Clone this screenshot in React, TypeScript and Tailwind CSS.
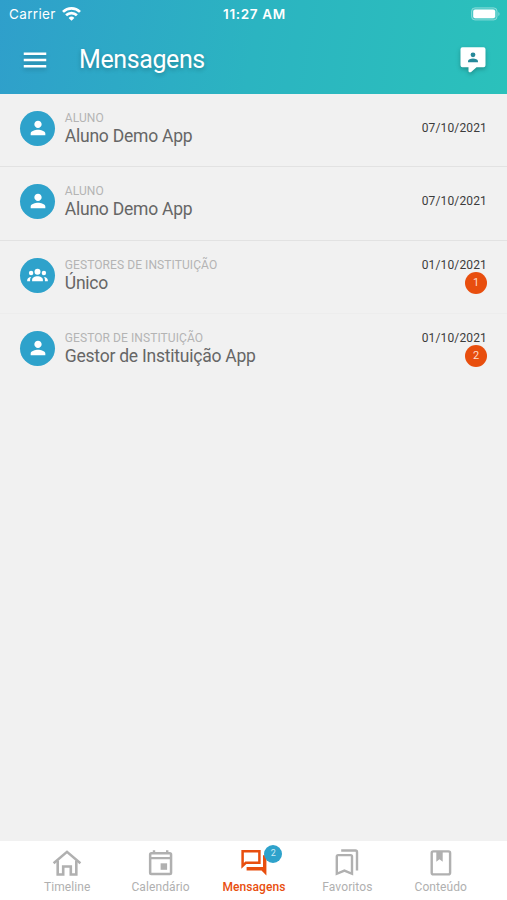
import React from 'react';
import { MdMenu, MdPerson } from 'react-icons/md';

const HomeIcon = () => (
  <svg className="w-[30px] h-[28px]" viewBox="0 0 30 28" fill="none" stroke="currentColor" strokeWidth="2.6">
    <path d="M1.6 14.200 15 2.800 28.400 14.200" strokeWidth="2.500" />
    <path d="M5.700 11.500v14h5.500v-8h7.600v8h5.500v-14" />
  </svg>
);

const CalendarIcon = () => (
  <svg className="w-[30px] h-[28px]" viewBox="0.4 0 30 28" fill="currentColor">
    <path
      fillRule="evenodd"
      d="M7.200 1.200h2.400V3h10.800V1.200h2.400V3h1.400a2.500 2.500 0 0 1 2.500 2.500v18.200a2.500 2.500 0 0 1-2.500 2.500H5.800a2.500 2.500 0 0 1-2.500-2.500V5.500A2.500 2.500 0 0 1 5.800 3h1.400zM5.800 5.400v2.500h18.400V5.400zM5.800 10.300v13.500h18.400V10.300z"
    />
    <path d="M15 14.300h6.500v6.500H15z" />
  </svg>
);

const ForumIcon = () => (
  <svg className="w-[30px] h-[28px]" viewBox="0 0 30 28">
    <path d="M3.600 2.300h16.800v11.500H6.800l-3.200 3z" fill="none" stroke="currentColor" strokeWidth="2.500" />
    <path d="M24 6.200h3.400v20.300L22.500 21.600H7.600V18H24z" fill="currentColor" />
  </svg>
);

const BookmarksIcon = () => (
  <svg className="w-[30px] h-[28px]" viewBox="0 0 30 28" fill="none" stroke="currentColor" strokeWidth="2.400">
    <path d="M4.800 24.800V7.400c0-.8.500-1.300 1.300-1.300h12.600c.8 0 1.300.5 1.300 1.300v17.400l-7.600-3.200z" />
    <path d="M9.200 1.500h14.300c.9 0 1.500.6 1.500 1.500v18.400" />
  </svg>
);

const BookIcon = () => (
  <svg className="w-[30px] h-[28px]" viewBox="0 0 30 28" fill="none" stroke="currentColor" strokeWidth="2.400">
    <rect x="5.700" y="2.400" width="18.400" height="23" rx="1.600" />
    <path d="M10.300 2.400h6.400v10.300l-3.200-2.400-3.200 2.400z" fill="currentColor" stroke="none" />
  </svg>
);

const GroupIcon = () => (
  <svg className="w-[21px] h-[14px]" viewBox="0 0 21 14" fill="currentColor">
    <circle cx="10.500" cy="3.700" r="3" />
    <circle cx="4.100" cy="5" r="2.200" />
    <circle cx="16.900" cy="5" r="2.200" />
    <path d="M5.100 13.300v-1.500c0-2.300 2.700-3.600 5.400-3.600s5.400 1.300 5.400 3.600v1.500z" />
    <path d="M.2 13.300V12c0-1.600 1.600-2.800 4-3-.8.800-1.100 1.700-1.100 2.800v1.500zM20.800 13.300V12c0-1.600-1.600-2.800-4-3 .8.800 1.100 1.700 1.100 2.800v1.500z" />
  </svg>
);

const ContactMessageIcon = () => (
  <svg className="w-[26px] h-[26px] drop-shadow-[0_2px_2px_rgba(0,0,0,0.25)]" viewBox="0 0 26 26">
    <path
      fill="#fff"
      d="M2.500 .3h21a2 2 0 0 1 2 2v16a2 2 0 0 1-2 2h-7l-5.300 4.600c-1.100.9-2.700.4-2.700-1v-3.600h-6a2 2 0 0 1-2-2v-16a2 2 0 0 1 2-2z"
    />
    <circle cx="13" cy="7.800" r="2.400" fill="#26899a" />
    <path fill="#26899a" d="M8 15.300v-1c0-1.700 2.600-2.700 5-2.700s5 1 5 2.700v1z" />
  </svg>
);

const messages = [
  { type: 'ALUNO', name: 'Aluno Demo App', date: '07/10/2021', unread: 0, group: false, row: 'h-[73px] border-[#e2e2e2]' },
  { type: 'ALUNO', name: 'Aluno Demo App', date: '07/10/2021', unread: 0, group: false, row: 'h-[74px] border-[#e2e2e2]' },
  { type: 'GESTORES DE INSTITUIÇÃO', name: 'Único', date: '01/10/2021', unread: 1, group: true, row: 'h-[73px] border-[#ededed]' },
  { type: 'GESTOR DE INSTITUIÇÃO', name: 'Gestor de Instituição App', date: '01/10/2021', unread: 2, group: false, row: 'h-[73px] border-transparent' },
];

const tabs = [
  { label: 'Timeline', icon: HomeIcon, active: false, badge: 0 },
  { label: 'Calendário', icon: CalendarIcon, active: false, badge: 0 },
  { label: 'Mensagens', icon: ForumIcon, active: true, badge: 2 },
  { label: 'Favoritos', icon: BookmarksIcon, active: false, badge: 0 },
  { label: 'Conteúdo', icon: BookIcon, active: false, badge: 0 },
];

const App = () => {
  return (
    <div className="flex flex-col w-full h-[900px] bg-[#f1f1f1] font-['Roboto',sans-serif] overflow-hidden">
      <header className="h-[94px] shrink-0 bg-[linear-gradient(100deg,#2f9fcb_0%,#2bb4c1_50%,#2bc1bb_100%)] text-white">
        {/* Status bar */}
        <div className="grid grid-cols-3 items-center h-7 pl-[9px] pr-[6px] font-['Inter',sans-serif] text-[13.5px]">
          <div className="flex items-center gap-[6px]">
            <span className="tracking-[0.35px]">Carrier</span>
            <svg className="w-[19px] h-[14px]" viewBox="0 0 19 14" fill="none" stroke="#fff" strokeWidth="2.700">
              <path d="M1 4.900a12.200 12.200 0 0 1 17 0M4.100 8.300a7.700 7.700 0 0 1 10.800 0" />
              <path d="M9.500 13.800 6.600 10.900a4.100 4.100 0 0 1 5.800 0z" fill="#fff" stroke="none" />
            </svg>
          </div>
          <span className="pr-px text-center font-semibold tracking-[0.65px] whitespace-nowrap">11:27 AM</span>
          <svg className="w-[31px] h-[14px] justify-self-end" viewBox="0 0 31 14">
            <rect x="1.500" y=".8" width="25.600" height="12.200" rx="3.500" fill="#fff" fillOpacity=".15" stroke="#fff" strokeOpacity=".35" />
            <rect x="3.200" y="2.600" width="22" height="8.600" rx="2" fill="#fff" />
            <path d="M28.400 5v4c1.500-.5 1.500-3.500 0-4z" fill="#fff" fillOpacity=".45" />
          </svg>
        </div>

        {/* Title bar */}
        <div className="flex items-center h-[63px] pl-5 pr-[21px]">
          <MdMenu className="w-[30px] h-[30px] drop-shadow-[0_2px_2px_rgba(0,0,0,0.2)]" />
          <h1 className="flex-1 ml-[29px] text-[25px] leading-none tracking-[-0.4px] [text-shadow:0_2px_4px_rgba(0,0,0,0.22)]">
            Mensagens
          </h1>
          <ContactMessageIcon />
        </div>
      </header>

      <main className="flex-1">
        {messages.map((message, index) => (
          <div key={index} className={`flex items-start pt-[17px] pl-[20.3px] pr-5 border-b ${message.row}`}>
            <div className="flex items-center justify-center w-[34.5px] h-[34.5px] shrink-0 rounded-full bg-[#2ea2cb] text-white">
              {message.group ? <GroupIcon /> : <MdPerson className="w-[22px] h-[22px]" />}
            </div>
            <div className="flex-1 ml-[10px]">
              <p className="text-[12px] leading-[14px] tracking-[0.08px] text-[#b4b4b4]">{message.type}</p>
              <p className="mt-px text-[17.5px] leading-[20px] tracking-[-0.23px] text-[#666666]">{message.name}</p>
            </div>
            <div className={`flex flex-col items-end ${message.unread ? '' : 'pt-[10px]'}`}>
              <span className="text-[12px] leading-[14px] tracking-[0.15px] text-[#3c3c3c]">{message.date}</span>
              {message.unread > 0 && (
                <span className="flex items-center justify-center w-[22px] h-[22px] rounded-full bg-[#e84e0e] text-[#ffdccb] text-[11px]">
                  {message.unread}
                </span>
              )}
            </div>
          </div>
        ))}
      </main>

      <nav className="flex justify-center h-[59px] shrink-0 bg-white pt-2 pl-px">
        {tabs.map(({ label, icon: Icon, active, badge }) => (
          <div
            key={label}
            className={`relative flex flex-col items-center w-[93.4px] ${active ? 'text-[#e84e0e]' : 'text-[#b0b0b0]'}`}
          >
            <Icon />
            <span className={`mt-[3px] text-[12px] leading-[14px] tracking-[0.1px] ${active ? 'font-medium' : ''}`}>
              {label}
            </span>
            {badge > 0 && (
              <span className="absolute left-[57px] top-[-4px] flex items-center justify-center w-[18px] h-[18px] rounded-full bg-[#2ea2cb] text-[#cdeaf5] text-[9px]">
                {badge}
              </span>
            )}
          </div>
        ))}
      </nav>
    </div>
  );
};

export default App;
